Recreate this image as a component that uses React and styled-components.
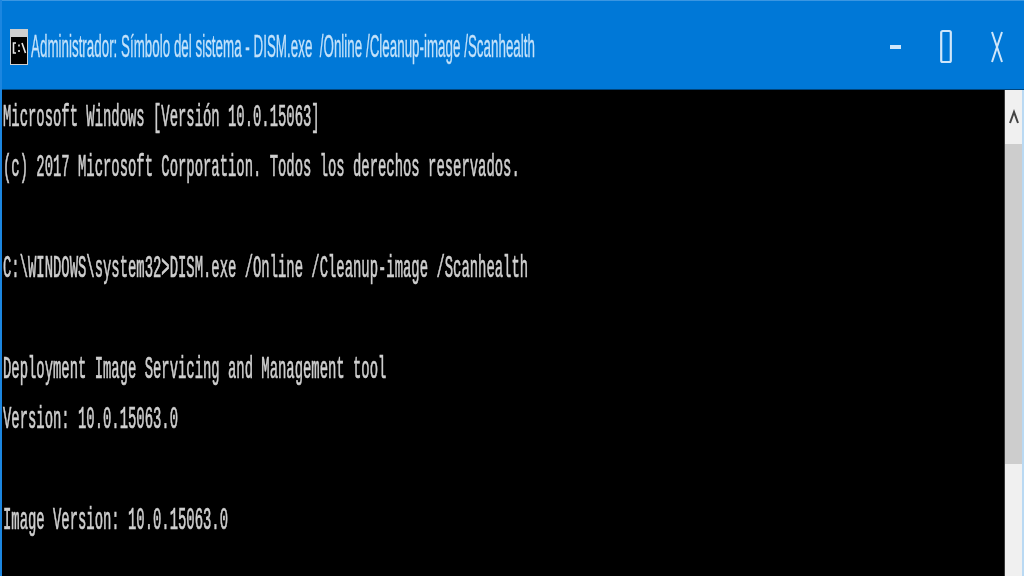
import React from "react";
import styled, { createGlobalStyle } from "styled-components";

const Global = createGlobalStyle`
  html, body { margin: 0; padding: 0; background: #000; overflow: hidden; }
`;

const Frame = styled.div`
  width: 1024px;
  height: 576px;
  display: flex;
  flex-direction: column;
  overflow: hidden;
  box-sizing: border-box;
  border-left: 2px solid #1c86e0;
  background: #000;
`;

const TitleBar = styled.header`
  height: 90px;
  flex: none;
  display: flex;
  align-items: center;
  box-sizing: border-box;
  padding: 3px 0 0 10px;
  background: #0078d7;
  border-top: 1px solid #3a96e2;
  border-bottom: 1px solid #00457c;
  margin-left: -2px;
`;

const AppIcon = styled.svg`
  width: 18px;
  height: 36px;
  flex: none;
  margin-right: 3px;
  filter: blur(0.6px);
`;

const Title = styled.div`
  flex: none;
  width: 504px;
  font: 31px "Liberation Sans", Arial, sans-serif;
  -webkit-text-stroke: 0.3px #c4e2fa;
  color: #c4e2fa;
  white-space: pre;
  transform-origin: left center;
  transform: scaleX(0.432);
  filter: blur(0.5px);
`;

const Controls = styled.div`
  margin-left: auto;
  display: flex;
  align-items: center;
  gap: 38px;
  padding-right: 20px;
  filter: blur(0.5px);
`;

const Control = styled.svg`
  display: block;
  width: ${(p) => p.$w}px;
  height: 36px;
  color: #cfe6fa;
`;

const Body = styled.main`
  flex: 1;
  display: flex;
  min-height: 0;
`;

const Console = styled.div`
  flex: 1;
  padding-top: 3px;
  overflow: hidden;
  filter: blur(0.6px);
`;

const Line = styled.div`
  height: 50.4px;
  margin-left: 1px;
  font: 31px/50.4px "Liberation Mono", "DejaVu Sans Mono", monospace;
  -webkit-text-stroke: 0.7px #cfcfcf;
  color: #cfcfcf;
  white-space: pre;
  transform-origin: left center;
  transform: scaleX(0.448);
`;

const ScrollBar = styled.aside`
  width: 20px;
  flex: none;
  background: #f0f0f0;
  border-left: 1px solid #3a3a3a;
  border-right: 2px solid #b9d9f3;
  box-sizing: border-box;
  display: flex;
  flex-direction: column;
`;

const ScrollUp = styled.div`
  height: 54px;
  flex: none;
  display: flex;
  align-items: center;
  justify-content: center;
`;

const Thumb = styled.div`
  height: 320px;
  flex: none;
  background: #cdcdcd;
`;

const lines = [
  "Microsoft Windows [Versión 10.0.15063]",
  "(c) 2017 Microsoft Corporation. Todos los derechos reservados.",
  "",
  "C:\\WINDOWS\\system32>DISM.exe /Online /Cleanup-image /Scanhealth",
  "",
  "Deployment Image Servicing and Management tool",
  "Version: 10.0.15063.0",
  "",
  "Image Version: 10.0.15063.0",
];

export default function App() {
  return (
    <>
      <Global />
      <Frame>
        <TitleBar>
          <AppIcon viewBox="0 0 18 36">
            <rect x="0" y="0" width="18" height="36" fill="#cfcfcf" />
            <rect x="1" y="8" width="16" height="27" fill="#000" />
            <path d="M6 14H3.5v10H6M9 15.5v2M9 21v2M12 14l3.5 10" stroke="#e6e6e6" strokeWidth="1.6" fill="none" />
          </AppIcon>
          <Title>Administrador: Símbolo del sistema - DISM.exe  /Online /Cleanup-image /Scanhealth</Title>
          <Controls>
            <Control $w={13} viewBox="0 0 13 36">
              <rect x="1" y="16" width="11" height="4" fill="currentColor" />
            </Control>
            <Control $w={12} viewBox="0 0 12 36">
              <rect x="1.2" y="2" width="9.6" height="31" rx="1.5" fill="none" stroke="currentColor" strokeWidth="2.2" />
            </Control>
            <Control $w={14} viewBox="0 0 14 36">
              <path d="M2 3l10 30M12 3L2 33" fill="none" stroke="currentColor" strokeWidth="2" />
            </Control>
          </Controls>
        </TitleBar>
        <Body>
          <Console>
            {lines.map((t, i) => (
              <Line key={i}>{t}</Line>
            ))}
          </Console>
          <ScrollBar>
            <ScrollUp>
              <svg width="10" height="16" viewBox="0 0 10 16">
                <path d="M1 14L5 3l4 11" fill="none" stroke="#444" strokeWidth="2" />
              </svg>
            </ScrollUp>
            <Thumb />
          </ScrollBar>
        </Body>
      </Frame>
    </>
  );
}
